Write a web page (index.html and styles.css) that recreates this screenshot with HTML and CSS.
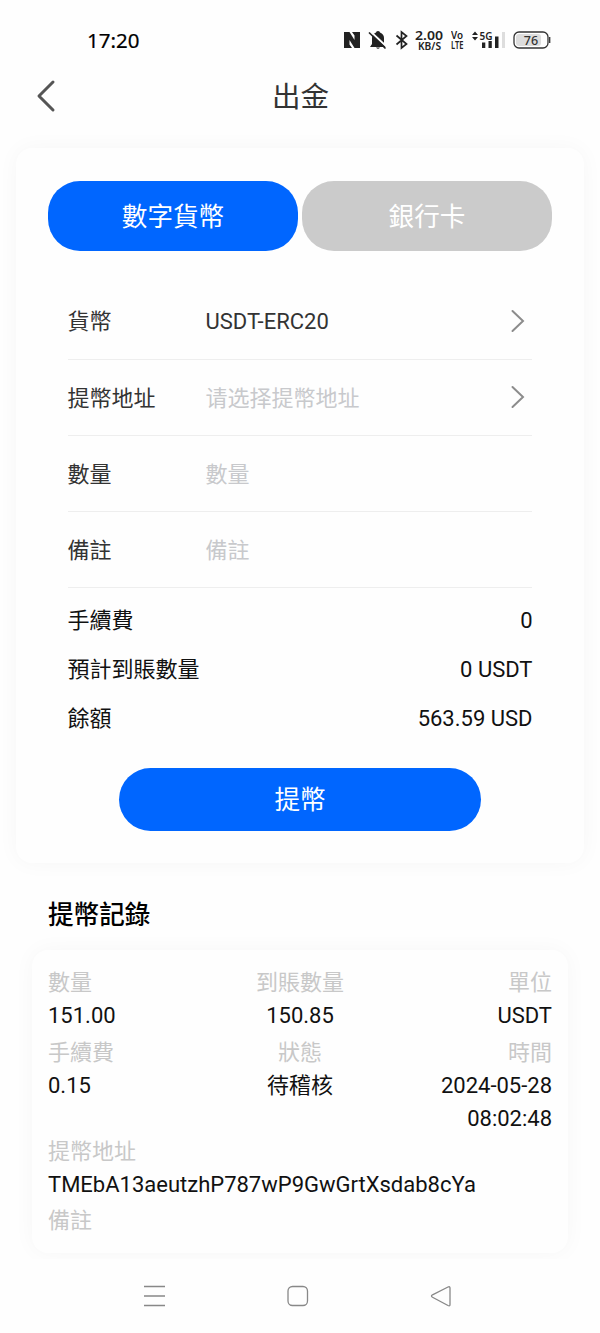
FILE: index.html
```html
<!DOCTYPE html>
<html lang="zh-Hant">
<head>
<meta charset="utf-8">
<title>出金</title>
<link rel="stylesheet" href="styles.css">
</head>
<body>
<div class="status">
  <span class="time">17:20</span>
  <div class="indicators">
    <svg class="nfc" width="18" height="18" viewBox="0 0 18 18"><path d="M1 1H6.500L11.500 9V4.500L9 1H17V17H11.500L6.500 9V13.500L9 17H1z" fill="#222"/></svg>
    <svg class="bell" width="20" height="20" viewBox="0 0 20 20"><path d="M4 14V8q0-4 4-5.500Q8 1 10 1t2 1.500Q16 4 16 8v6l2 3H2zM8 17.500h4q-2 2.500-4 0" fill="#222"/><path d="M2.500 1.500l16 15" stroke="#fefefe" stroke-width="1.800"/><path d="M1 2.500l16.500 16" stroke="#222" stroke-width="1.700"/></svg>
    <svg class="bluetooth" width="14" height="20" viewBox="0 0 14 20"><path d="M1.500 5.500l10 8.500-5 4V2l5 4-10 8.500" fill="none" stroke="#222" stroke-width="1.700"/></svg>
    <svg class="speed" width="29" height="30" viewBox="0 0 29 30"><text x="0" y="14.500" font-size="13" textLength="28" lengthAdjust="spacingAndGlyphs">2.00</text><text x="3" y="24.500" font-size="10" textLength="23" lengthAdjust="spacingAndGlyphs">KB/S</text></svg>
    <svg class="volte" width="14" height="30" viewBox="0 0 14 30"><text x="0" y="14" font-size="10" textLength="12" lengthAdjust="spacingAndGlyphs">Vo</text><text x="0" y="23.500" font-size="10.500" textLength="12.500" lengthAdjust="spacingAndGlyphs">LTE</text></svg>
    <svg class="signal" width="34" height="30" viewBox="0 0 34 30"><path d="M0 10l3-3.500L6 10zM0 12h6l-3 3.500z" fill="#222"/><text x="7.500" y="14.500" font-size="11" textLength="13" lengthAdjust="spacingAndGlyphs">5G</text><path d="M10 17.500h3.300V23H10zM16.500 16h3.300v7h-3.300zM23 11.500h3.500V23H23z" fill="#222"/><path d="M30 7h3v16h-3z" fill="#ddd"/></svg>
    <svg class="battery" width="39" height="18" viewBox="0 0 39 18"><rect x="3" y="3" width="25" height="12" rx="3" fill="#ddd"/><rect x="1" y="1" width="34" height="16" rx="5" fill="none" stroke="#333" stroke-width="1.300"/><path d="M36.700 6v6" stroke="#333" stroke-width="1.300"/><text x="18" y="13.500" text-anchor="middle" class="charge">76</text></svg>
  </div>
</div>
<header class="header">
  <svg class="back" width="20" height="34" viewBox="0 0 20 34"><path d="M17 3L3 17l14 14" fill="none" stroke="#555" stroke-width="3" stroke-linecap="round" stroke-linejoin="round"/></svg>
  <h1>出金</h1>
</header>
<main class="content">
  <section class="card form">
    <div class="tabs"><button class="tab active">數字貨幣</button><button class="tab">銀行卡</button></div>
    <div class="fields">
      <div class="field"><span class="name">貨幣</span><span class="value">USDT-ERC20</span><svg class="arrow" width="16" height="24" viewBox="0 0 16 24"><path d="M2.500 2l10.500 10L2.500 22" fill="none" stroke="#8c8c8c" stroke-width="2" stroke-linecap="round"/></svg></div>
      <div class="field"><span class="name">提幣地址</span><span class="value hint" lang="zh-Hans">请选择提幣地址</span><svg class="arrow" width="16" height="24" viewBox="0 0 16 24"><path d="M2.500 2l10.500 10L2.500 22" fill="none" stroke="#8c8c8c" stroke-width="2" stroke-linecap="round"/></svg></div>
      <div class="field"><span class="name">數量</span><span class="value hint">數量</span></div>
      <div class="field"><span class="name">備註</span><span class="value hint">備註</span></div>
    </div>
    <div class="summary">
      <div class="line"><span>手續費</span><span>0</span></div>
      <div class="line"><span>預計到賬數量</span><span>0 USDT</span></div>
      <div class="line"><span>餘額</span><span>563.59 USD</span></div>
    </div>
    <button class="submit">提幣</button>
  </section>
  <h2>提幣記錄</h2>
  <section class="card record">
    <div class="row amounts">
      <div><div class="label">數量</div><div>151.00</div></div>
      <div><div class="label">到賬數量</div><div>150.85</div></div>
      <div><div class="label">單位</div><div>USDT</div></div>
    </div>
    <div class="row details">
      <div><div class="label">手續費</div><div>0.15</div></div>
      <div><div class="label">狀態</div><div>待稽核</div></div>
      <div><div class="label">時間</div><div>2024-05-28<br>08:02:48</div></div>
    </div>
    <div class="address"><div class="label">提幣地址</div><div>TMEbA13aeutzhP787wP9GwGrtXsdab8cYa</div></div>
    <div class="label">備註</div>
  </section>
</main>
<nav class="navbar">
  <svg width="24" height="24" viewBox="0 0 24 24"><path d="M2 2.500h21M2 12h21M2 21.500h21"/></svg>
  <svg width="24" height="24" viewBox="0 0 24 24"><rect x="2" y="2.500" width="19.500" height="19" rx="4.500"/></svg>
  <svg width="24" height="24" viewBox="0 0 24 24"><path d="M3.500 10.800L19 3q2-.8 2 1v16.500q0 2-2 1L3.500 13.200q-2-1.200 0-2.400z"/></svg>
</nav>
</body>
</html>
```
FILE: styles.css
```css
* { box-sizing: border-box; }
body {
  margin: 0;
  width: 600px;
  height: 1333px;
  overflow: hidden;
  display: flex;
  flex-direction: column;
  background: #fefefe;
  color: #111;
  font: 22px/33px Roboto, "Noto Sans CJK TC", sans-serif;
}
svg { display: block; flex: none; }
button { border: 0; padding: 2px 0 0; color: #fff; font: 25.600px/36px Roboto, "Noto Sans CJK TC", sans-serif; }
.status {
  height: 60px;
  flex: none;
  display: flex;
  justify-content: space-between;
  padding: 21px 48px 0 87px;
}
.time { font: 20.500px/38px "Noto Sans", sans-serif; height: 38px; color: #000; -webkit-text-stroke: .2px #000; }
.indicators { display: flex; align-items: center; height: 38px; }
.indicators text { font-family: "Noto Sans", sans-serif; font-weight: 600; fill: #222; }
.nfc { margin-right: 7px; }
.bell { margin-right: 7px; }
.bluetooth { margin-right: 6px; }
.speed { margin-right: 7px; }
.volte { margin-right: 7px; }
.signal { margin-right: 7px; }
.indicators .charge { font-size: 12.500px; font-weight: 500; fill: #333; }
.header {
  height: 72px;
  flex: none;
  display: grid;
  grid-template-columns: 60px 1fr 60px;
  align-items: center;
  padding: 0 36px;
}
h1 { margin: 0; padding: 4px 0 0 1px; text-align: center; font-size: 28.500px; font-weight: 400; color: #333; line-height: 40px; }
.content { flex: none; height: 1127px; padding: 16px 16px 0; overflow: hidden; }
.card { background: #fefefe; border-radius: 16px; box-shadow: 0 0 22px rgba(0, 0, 0, .035); }
.form { height: 715px; padding: 33px 32px 0; display: flex; flex-direction: column; }
.tabs { display: flex; gap: 4px; }
.tab { width: 250px; height: 70px; border-radius: 32px; background: #cbcbcb; }
.tab.active { background: #0066ff; }
.fields { padding: 32.500px 20px 0; color: #333; }
.field { height: 76.200px; border-bottom: 1px solid #eee; display: flex; align-items: center; }
.name, .value { padding-top: 1.500px; }
.name { width: 138px; margin-left: -.5px; }
.value { flex: 1; }
.hint { color: #c8c9cc; }
.arrow { margin-right: 6px; }
.summary { padding: 8px 20px 0; }
.line { height: 49px; display: flex; justify-content: space-between; align-items: center; margin: 0 -.5px; }
.submit { width: 362px; height: 63px; margin: 24.500px auto 0; border-radius: 32px; background: #0066ff; }
h2 { margin: 34px 0 17px 32px; font-size: 25.600px; line-height: 36px; font-weight: 500; color: #000; }
.record { margin: 0 16px; height: 303px; padding: 16px; }
.label { color: #c8c8c8; }
.row { display: grid; grid-template-columns: repeat(3, 1fr); }
.row > :nth-child(2) { text-align: center; }
.row > :nth-child(3) { text-align: right; }
.amounts { height: 70px; }
.address { height: 69.400px; }
.details { height: 99px; }
.navbar { height: 74px; flex: none; display: flex; justify-content: space-between; align-items: center; padding: 0 147px 0 142px; background: #fefefe; }
.navbar svg { fill: none; stroke: #888; stroke-width: 1.300; }
```
